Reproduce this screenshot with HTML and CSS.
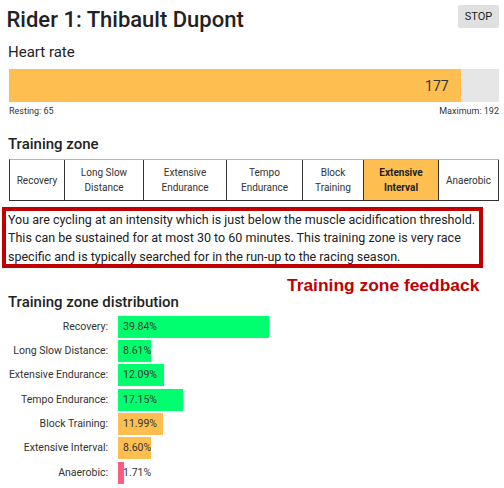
FILE: index.html
```html
<!DOCTYPE html>
<html lang="en">
<head>
<meta charset="utf-8">
<title>Rider 1</title>
<link rel="stylesheet" href="styles.css">
</head>
<body>
<main class="main">
  <header class="header">
    <h1 class="title">Rider 1: Thibault Dupont</h1>
    <button class="stop">STOP</button>
  </header>

  <h2 class="h-heart">Heart rate</h2>
  <div class="hr-bar">
    <div class="hr-fill" style="width: 92.19%"><span class="hr-value">177</span></div>
  </div>
  <div class="hr-scale">
    <span>Resting: 65</span>
    <span>Maximum: 192</span>
  </div>

  <h2 class="h-section h-zone">Training zone</h2>
  <div class="zones">
    <div class="zone c1">Recovery</div>
    <div class="zone c2">Long Slow Distance</div>
    <div class="zone c3">Extensive Endurance</div>
    <div class="zone c4">Tempo Endurance</div>
    <div class="zone c5">Block Training</div>
    <div class="zone c6 active">Extensive Interval</div>
    <div class="zone c7">Anaerobic</div>
  </div>

  <section class="feedback">
    <p class="feedback-text">You are cycling at an intensity which is just below the muscle acidification threshold. This can be sustained for at most 30 to 60 minutes. This training zone is very race specific and is typically searched for in the run-up to the racing season.</p>
    <div class="annot-frame"></div>
    <div class="annot-label">Training zone feedback</div>
  </section>

  <h2 class="h-section h-dist">Training zone distribution</h2>
  <div class="dist">
    <div class="dist-label">Recovery:</div>
    <div class="dist-track"><div class="dist-bar green" style="width: 39.84%"></div><span class="dist-val">39.84%</span></div>
    <div class="dist-label">Long Slow Distance:</div>
    <div class="dist-track"><div class="dist-bar green" style="width: 8.61%"></div><span class="dist-val">8.61%</span></div>
    <div class="dist-label">Extensive Endurance:</div>
    <div class="dist-track"><div class="dist-bar green" style="width: 12.09%"></div><span class="dist-val">12.09%</span></div>
    <div class="dist-label">Tempo Endurance:</div>
    <div class="dist-track"><div class="dist-bar green" style="width: 17.15%"></div><span class="dist-val">17.15%</span></div>
    <div class="dist-label">Block Training:</div>
    <div class="dist-track"><div class="dist-bar orange" style="width: 11.99%"></div><span class="dist-val">11.99%</span></div>
    <div class="dist-label">Extensive Interval:</div>
    <div class="dist-track"><div class="dist-bar orange" style="width: 8.60%"></div><span class="dist-val">8.60%</span></div>
    <div class="dist-label">Anaerobic:</div>
    <div class="dist-track"><div class="dist-bar pink" style="width: 1.71%"></div><span class="dist-val">1.71%</span></div>
  </div>
</main>
</body>
</html>
```
FILE: styles.css
```css
html, body {
  margin: 0;
  padding: 0;
  background: #ffffff;
}

body {
  font-family: Roboto, "Noto Sans", Arial, sans-serif;
  color: #222222;
}

.main {
  width: 491px;
  padding: 0 5px 0 8px;
}

.header {
  display: flex;
  justify-content: space-between;
  align-items: flex-start;
  padding-top: 5px;
}

.title {
  margin: 2px 0 0 -1.5px;
  font-size: 22px;
  line-height: 25px;
  font-weight: 500;
  color: #222222;
}

.stop {
  width: 41px;
  height: 23px;
  margin: 0;
  padding: 0;
  border: none;
  border-radius: 2px;
  background: #e0e0e0;
  font-family: Roboto, Arial, sans-serif;
  font-size: 11px;
  color: #222222;
}

.h-heart {
  margin: 11px 0 0 0;
  font-size: 15px;
  line-height: 18px;
  font-weight: 400;
  color: #222222;
}

.hr-bar {
  margin: 8px 0 0 1px;
  height: 33px;
  background: #e6e6e6;
  display: flex;
}

.hr-fill {
  background: #ffbf50;
  display: flex;
  align-items: center;
  justify-content: flex-end;
  padding-right: 12px;
  box-sizing: border-box;
}

.hr-value {
  font-size: 14px;
  color: #333333;
  padding-top: 1px;
}

.hr-scale {
  display: flex;
  justify-content: space-between;
  margin: 4px 0 0 1px;
  font-size: 9px;
  line-height: 11px;
  color: #333333;
}

.h-section {
  margin: 0;
  font-size: 15px;
  line-height: 18px;
  font-weight: 500;
  color: #222222;
}

.h-zone {
  margin-top: 17.7px;
}

.zones {
  display: grid;
  grid-template-columns: 55px 79px 83px 76px 61px 75px 1fr;
  margin: 6.6px 0 0 1px;
  border-top: 1px solid #b5b5b5;
  border-bottom: 1px solid #333333;
  border-left: 1px solid #333333;
  font-size: 10px;
  line-height: 15px;
  color: #333333;
}

.zone {
  display: flex;
  align-items: center;
  justify-content: center;
  height: 40px;
  padding: 0 2px;
  text-align: center;
  border-right: 1px solid #333333;
}

.zone.active {
  background: #ffbf50;
  font-weight: 700;
  color: #222222;
}

.feedback {
  position: relative;
  margin-top: 9.7px;
}

.feedback-text {
  margin: 0;
  font-size: 12.5px;
  line-height: 18.3px;
  color: #222222;
}

.annot-frame {
  position: absolute;
  top: -4px;
  left: -6px;
  right: 16px;
  bottom: -2.5px;
  border: 4px solid #c00000;
}

.annot-label {
  position: absolute;
  top: 64.5px;
  left: 279px;
  font-family: "Liberation Sans", Arial, sans-serif;
  font-weight: 700;
  font-size: 17.4px;
  line-height: 20px;
  color: #c00000;
  white-space: nowrap;
}

.h-dist {
  margin-top: 27px;
}

.dist {
  display: grid;
  grid-template-columns: 100px 1fr;
  column-gap: 10px;
  row-gap: 2.3px;
  margin: 5px 2px 0 0;
  font-size: 10.5px;
  color: #333333;
}

.dist-label {
  height: 22px;
  line-height: 22px;
  text-align: right;
  white-space: nowrap;
}

.dist-track {
  position: relative;
  height: 22px;
}

.dist-bar {
  height: 22px;
}

.dist-val {
  position: absolute;
  left: 5px;
  top: 0;
  line-height: 22px;
}

.green { background: #00ff6e; }
.orange { background: #ffbf50; }
.pink { background: #ff5b80; }
```
